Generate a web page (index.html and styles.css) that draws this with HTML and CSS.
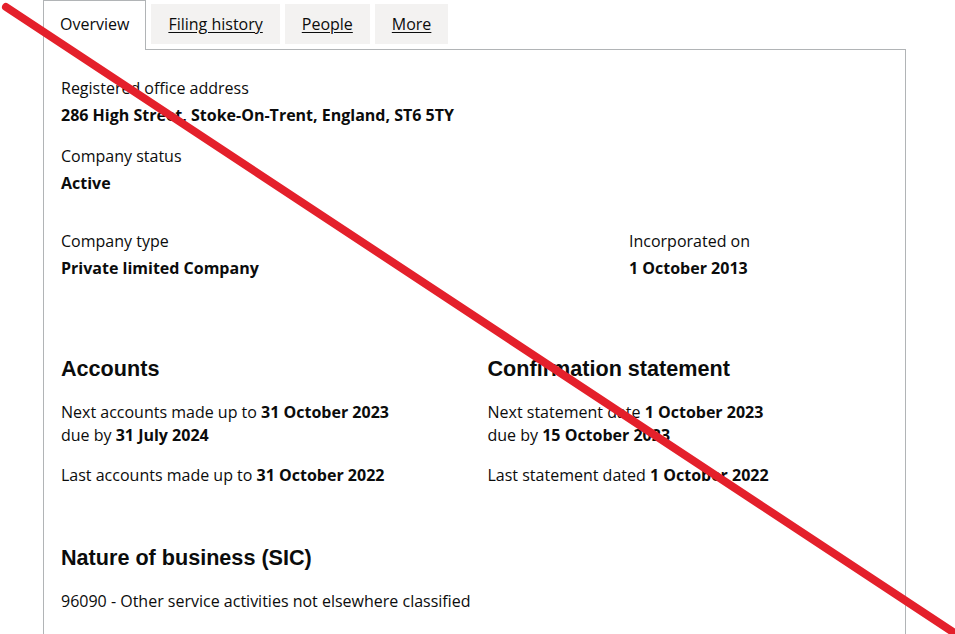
FILE: index.html
```html
<!DOCTYPE html>
<html lang="en">
<head>
    <meta charset="UTF-8">
    <title>Company overview</title>
    <link rel="stylesheet" href="styles.css">
</head>
<body>
    <div class="page">
        <ul class="tabs">
            <li class="tab tab-active">Overview</li>
            <li class="tab"><a href="#">Filing history</a></li>
            <li class="tab"><a href="#">People</a></li>
            <li class="tab"><a href="#">More</a></li>
        </ul>

        <div class="panel">
            <dl class="field">
                <dt>Registered office address</dt>
                <dd>286 High Street, Stoke-On-Trent, England, ST6 5TY</dd>
            </dl>

            <dl class="field">
                <dt>Company status</dt>
                <dd>Active</dd>
            </dl>

            <div class="row-type">
                <dl class="field">
                    <dt>Company type</dt>
                    <dd>Private limited Company</dd>
                </dl>
                <dl class="field">
                    <dt>Incorporated on</dt>
                    <dd>1 October 2013</dd>
                </dl>
            </div>

            <div class="row-half">
                <div class="section">
                    <h2 class="heading">Accounts</h2>
                    <p>Next accounts made up to <strong>31 October 2023</strong><br>
                    due by <strong>31 July 2024</strong></p>
                    <p>Last accounts made up to <strong>31 October 2022</strong></p>
                </div>
                <div class="section">
                    <h2 class="heading">Confirmation statement</h2>
                    <p>Next statement date <strong>1 October 2023</strong><br>
                    due by <strong>15 October 2023</strong></p>
                    <p>Last statement dated <strong>1 October 2022</strong></p>
                </div>
            </div>

            <div class="section">
                <h2 class="heading">Nature of business (SIC)</h2>
                <p>96090 - Other service activities not elsewhere classified</p>
            </div>
        </div>
    </div>

    <!-- red strike across the screenshot -->
    <svg class="strike" width="955" height="634" viewBox="0 0 955 634">
        <line x1="6" y1="7" x2="962" y2="638" stroke="#e4202b" stroke-width="8" stroke-linecap="round"/>
    </svg>
</body>
</html>
```

FILE: styles.css
```css
* {
    margin: 0;
    padding: 0;
    box-sizing: border-box;
}

body {
    font-family: 'Open Sans', 'Liberation Sans', sans-serif;
    font-size: 16px;
    line-height: 23px;
    color: #0b0c0c;
    background: #fff;
    overflow: hidden;
    height: 634px;
}

.page {
    width: 863px;
    margin-left: 43px;
}

/* tabs */
.tabs {
    list-style: none;
    display: flex;
    align-items: flex-start;
    gap: 5px;
}

.tab {
    background: #f3f2f1;
    margin-top: 4px;
    height: 40px;
    padding: 0 17px;
    display: flex;
    align-items: center;
}

.tab a {
    color: #0b0c0c;
    text-decoration: underline;
    text-underline-offset: 2px;
}

.tab-active {
    background: #fff;
    margin-top: 0;
    height: 50px;
    border: 1px solid #b1b4b6;
    border-bottom: 0;
    margin-bottom: -1px;
    padding: 0 16px 2px;
    position: relative;
}

.panel {
    border: 1px solid #b1b4b6;
    border-bottom: 0;
    padding: 27px 17px 0;
    height: 585px;
}

/* key / value pairs */
.field dt {
    margin-bottom: 4px;
}

.field dd {
    font-weight: 700;
    margin-bottom: 18px;
}

.row-type {
    display: grid;
    grid-template-columns: 542px 1fr;
    gap: 26px;
    margin-top: 35px;
}

.row-half {
    display: grid;
    grid-template-columns: 1fr 1fr;
    gap: 26px;
    margin-top: 58px;
}

.heading {
    font-family: 'Liberation Sans', Arial, sans-serif;
    font-size: 21.6px;
    line-height: 26px;
    font-weight: 700;
    color: #0b0c0c;
    margin-bottom: 19px;
}

.section p {
    margin-bottom: 17px;
}

.section p strong {
    font-weight: 700;
}

.row-half + .section {
    margin-top: 41px;
}

.strike {
    position: absolute;
    top: 0;
    left: 0;
    pointer-events: none;
}
```
